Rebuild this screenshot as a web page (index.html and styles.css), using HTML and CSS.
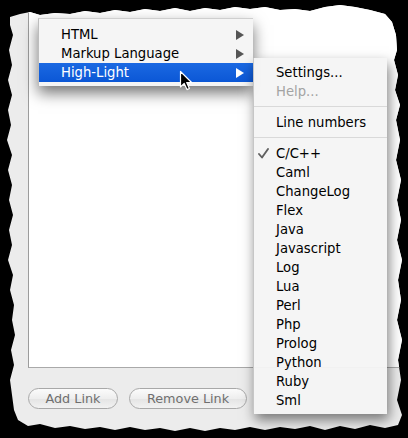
FILE: index.html
```html
<!DOCTYPE html>
<html>
<head>
<meta charset="utf-8">
<link rel="stylesheet" href="styles.css">
</head>
<body>
<div class="paper">
  <div class="textarea"></div>
  <div class="buttons">
    <div class="btn btn-add">Add Link</div>
    <div class="btn btn-remove">Remove Link</div>
  </div>

  <div class="menu main-menu">
    <div class="item"><span class="label">HTML</span><span class="arrow"></span></div>
    <div class="item"><span class="label">Markup Language</span><span class="arrow"></span></div>
    <div class="item selected"><span class="label">High-Light</span><span class="arrow"></span></div>
  </div>

  <div class="menu submenu">
    <div class="item"><span class="check"></span><span class="label">Settings...</span></div>
    <div class="item disabled"><span class="check"></span><span class="label">Help...</span></div>
    <div class="sep"></div>
    <div class="item"><span class="check"></span><span class="label">Line numbers</span></div>
    <div class="sep"></div>
    <div class="item"><span class="check"><svg width="11" height="11" viewBox="0 0 11 11"><path d="M1 6 L4 9.5 L10 1" fill="none" stroke="#606060" stroke-width="1.9" stroke-linecap="round" stroke-linejoin="round"/></svg></span><span class="label">C/C++</span></div>
    <div class="item"><span class="check"></span><span class="label">Caml</span></div>
    <div class="item"><span class="check"></span><span class="label">ChangeLog</span></div>
    <div class="item"><span class="check"></span><span class="label">Flex</span></div>
    <div class="item"><span class="check"></span><span class="label">Java</span></div>
    <div class="item"><span class="check"></span><span class="label">Javascript</span></div>
    <div class="item"><span class="check"></span><span class="label">Log</span></div>
    <div class="item"><span class="check"></span><span class="label">Lua</span></div>
    <div class="item"><span class="check"></span><span class="label">Perl</span></div>
    <div class="item"><span class="check"></span><span class="label">Php</span></div>
    <div class="item"><span class="check"></span><span class="label">Prolog</span></div>
    <div class="item"><span class="check"></span><span class="label">Python</span></div>
    <div class="item"><span class="check"></span><span class="label">Ruby</span></div>
    <div class="item"><span class="check"></span><span class="label">Sml</span></div>
  </div>

  <svg class="cursor" width="14" height="22" viewBox="0 0 14 22">
    <path d="M1.5 1.5 L1.5 17 L5.2 13.4 L8 19.6 L10.4 18.5 L7.7 12.5 L12.6 12.5 Z" fill="#000" stroke="#fff" stroke-width="1.2" stroke-linejoin="round"/>
  </svg>
</div>
</body>
</html>
```

FILE: styles.css
```css
html, body {
  margin: 0;
  padding: 0;
  background: #000;
}

body {
  width: 408px;
  height: 438px;
  overflow: hidden;
  font-family: "DejaVu Sans", "Noto Sans", sans-serif;
  font-size: 13.2px;
  color: #000;
}

.paper {
  position: relative;
  width: 408px;
  height: 438px;
  background: #ececec;
  display: flex;
  flex-direction: column;
  clip-path: polygon(
    10px 17px, 20px 14px, 30px 12px, 40px 15px, 55px 13px, 70px 14px, 85px 11px, 100px 13px,
    115px 10px, 130px 12px, 145px 9px, 160px 11px, 175px 8px, 190px 11px, 205px 8px, 220px 10px,
    235px 7px, 250px 9px, 265px 7px, 280px 10px, 295px 9px, 310px 11px, 325px 7px, 340px 5px,
    355px 7px, 370px 10px, 385px 14px,
    392px 22px, 396px 35px, 397px 50px, 394px 60px, 398px 75px, 395px 90px, 400px 105px, 396px 120px,
    400px 140px, 396px 160px, 401px 180px, 397px 200px, 401px 220px, 397px 240px, 402px 260px,
    398px 280px, 401px 300px, 397px 320px, 402px 340px, 398px 360px, 401px 380px, 397px 400px,
    402px 415px, 398px 425px,
    385px 428px, 370px 425px, 355px 429px, 340px 426px, 325px 430px, 310px 426px, 295px 429px,
    280px 427px, 265px 430px, 250px 427px, 235px 430px, 220px 428px, 205px 431px, 190px 428px,
    175px 431px, 160px 428px, 145px 430px, 130px 427px, 115px 430px, 100px 427px, 85px 429px,
    70px 426px, 55px 428px, 40px 424px, 28px 426px, 18px 420px,
    14px 410px, 12px 395px, 10px 380px, 14px 365px, 11px 350px, 15px 335px, 12px 320px, 14px 305px,
    10px 290px, 13px 275px, 8px 260px, 12px 245px, 9px 230px, 13px 215px, 9px 200px, 12px 185px,
    8px 170px, 12px 155px, 7px 140px, 11px 125px, 8px 110px, 12px 95px, 8px 80px, 12px 65px,
    9px 50px, 13px 35px, 10px 25px
  );
}

.textarea {
  margin-left: 28px;
  height: 367px;
  background: #fff;
  border-left: 1px solid #9c9c9c;
  border-bottom: 1px solid #a9a9a9;
  flex: none;
}

.buttons {
  display: flex;
  gap: 11px;
  margin-top: 20px;
  padding-left: 28px;
}

.btn {
  box-sizing: border-box;
  height: 21px;
  border: 1px solid #a8a8a8;
  border-radius: 11px;
  background: linear-gradient(#fbfbfb, #eeeeee 50%, #e4e4e4 51%, #f2f2f2);
  color: #6f6f6f;
  font-size: 12.8px;
  line-height: 19px;
  text-align: center;
}

.btn-add { width: 90px; }
.btn-remove { width: 118px; }

.menu {
  position: absolute;
  box-sizing: border-box;
  background: rgba(244, 244, 244, 0.95);
  display: flex;
  flex-direction: column;
}

.main-menu {
  left: 38px;
  top: 18px;
  width: 215px;
  padding: 6px 0 4px;
  border-top: 1px solid #cfcfcf;
  border-left: 1px solid #bdbdbd;
  box-shadow: 0 7px 14px rgba(0, 0, 0, 0.55);
}

.main-menu .item {
  height: 19px;
  display: flex;
  align-items: center;
  justify-content: space-between;
  padding: 0 9px 0 22px;
}

.main-menu .label {
  line-height: 19px;
}

.arrow {
  width: 0;
  height: 0;
  border-top: 5px solid transparent;
  border-bottom: 5px solid transparent;
  border-left: 8px solid #555;
}

.main-menu .selected {
  background: linear-gradient(#1b69e2, #0b57d6);
  color: #fff;
}

.main-menu .selected .arrow {
  border-left-color: #fff;
}

.submenu {
  left: 253px;
  top: 58px;
  width: 134px;
  padding: 5px 0 4px;
  border-left: 1px solid #c6c6c6;
  box-shadow: 2px 6px 12px rgba(0, 0, 0, 0.5);
}

.submenu .item {
  height: 19px;
  display: flex;
  align-items: center;
}

.check {
  width: 22px;
  padding-left: 4px;
  box-sizing: border-box;
  display: flex;
  align-items: center;
}

.label {
  white-space: nowrap;
}

.disabled {
  color: #a3a3a3;
}

.sep {
  height: 1px;
  margin: 5px 0 6px;
  background: #d9d9d9;
}

.cursor {
  position: absolute;
  left: 179px;
  top: 70px;
}
```
